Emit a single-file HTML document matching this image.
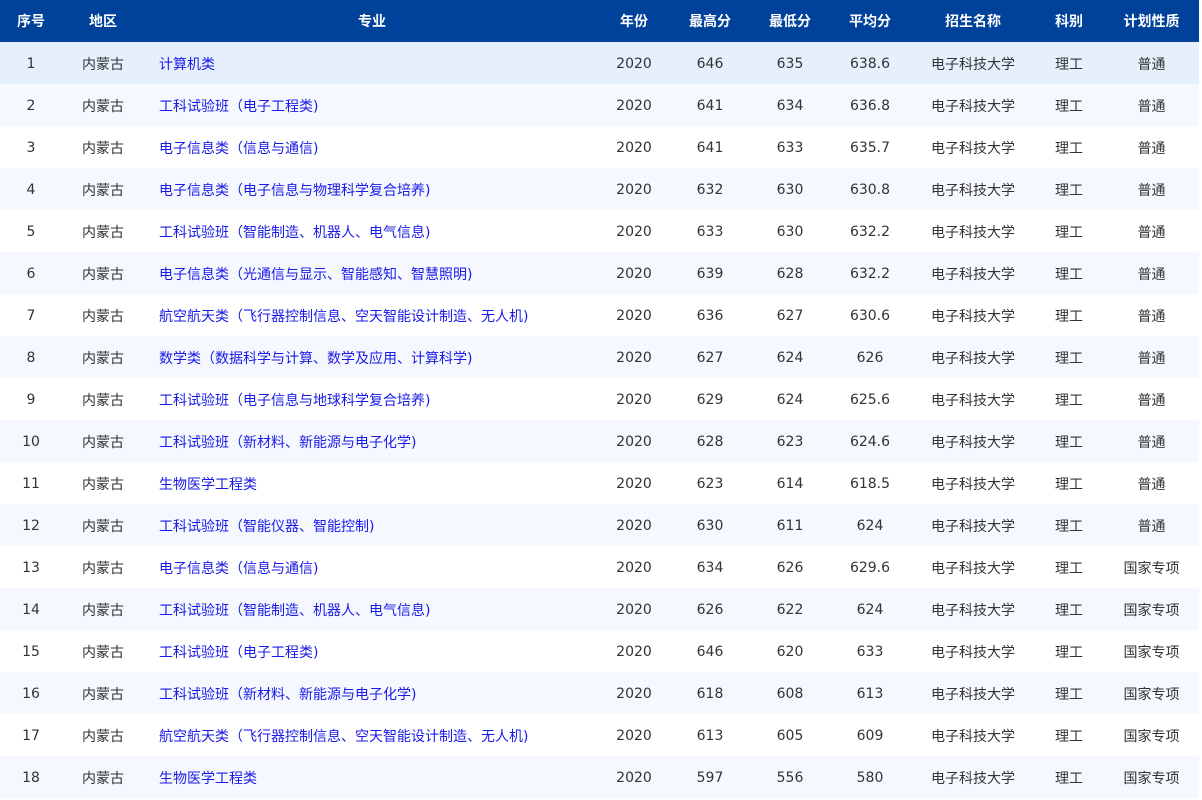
<!DOCTYPE html>
<html><head><meta charset="utf-8"><style>
body{margin:0;background:#fff;width:1202px;height:800px;overflow:hidden;font-family:"DejaVu Sans","Noto Sans CJK SC",sans-serif;}
table{border-collapse:collapse;table-layout:fixed;width:1199px;font-size:14px;}
th{background:#00419a;color:#fff;height:42px;font-weight:bold;padding:0;text-align:center;font-size:14px;}
td{height:40px;padding:2px 0 0 0;text-align:center;color:#333;}
td.m{text-align:left;padding-left:15px;color:#1a1ae6;}
tr.a td{background:#f5f8fe;} tr.h td{background:#e6f0fc;}
</style></head><body>
<table>
<colgroup><col style="width:62px"><col style="width:82px"><col style="width:456px"><col style="width:68px"><col style="width:84px"><col style="width:76px"><col style="width:84px"><col style="width:122px"><col style="width:70px"><col style="width:95px"></colgroup>
<tr><th>序号</th><th>地区</th><th>专业</th><th>年份</th><th>最高分</th><th>最低分</th><th>平均分</th><th>招生名称</th><th>科别</th><th>计划性质</th></tr>
<tr class="h"><td>1</td><td>内蒙古</td><td class="m">计算机类</td><td>2020</td><td>646</td><td>635</td><td>638.6</td><td>电子科技大学</td><td>理工</td><td>普通</td></tr>
<tr class="a"><td>2</td><td>内蒙古</td><td class="m">工科试验班（电子工程类)</td><td>2020</td><td>641</td><td>634</td><td>636.8</td><td>电子科技大学</td><td>理工</td><td>普通</td></tr>
<tr><td>3</td><td>内蒙古</td><td class="m">电子信息类（信息与通信)</td><td>2020</td><td>641</td><td>633</td><td>635.7</td><td>电子科技大学</td><td>理工</td><td>普通</td></tr>
<tr class="a"><td>4</td><td>内蒙古</td><td class="m">电子信息类（电子信息与物理科学复合培养)</td><td>2020</td><td>632</td><td>630</td><td>630.8</td><td>电子科技大学</td><td>理工</td><td>普通</td></tr>
<tr><td>5</td><td>内蒙古</td><td class="m">工科试验班（智能制造、机器人、电气信息)</td><td>2020</td><td>633</td><td>630</td><td>632.2</td><td>电子科技大学</td><td>理工</td><td>普通</td></tr>
<tr class="a"><td>6</td><td>内蒙古</td><td class="m">电子信息类（光通信与显示、智能感知、智慧照明)</td><td>2020</td><td>639</td><td>628</td><td>632.2</td><td>电子科技大学</td><td>理工</td><td>普通</td></tr>
<tr><td>7</td><td>内蒙古</td><td class="m">航空航天类（飞行器控制信息、空天智能设计制造、无人机)</td><td>2020</td><td>636</td><td>627</td><td>630.6</td><td>电子科技大学</td><td>理工</td><td>普通</td></tr>
<tr class="a"><td>8</td><td>内蒙古</td><td class="m">数学类（数据科学与计算、数学及应用、计算科学)</td><td>2020</td><td>627</td><td>624</td><td>626</td><td>电子科技大学</td><td>理工</td><td>普通</td></tr>
<tr><td>9</td><td>内蒙古</td><td class="m">工科试验班（电子信息与地球科学复合培养)</td><td>2020</td><td>629</td><td>624</td><td>625.6</td><td>电子科技大学</td><td>理工</td><td>普通</td></tr>
<tr class="a"><td>10</td><td>内蒙古</td><td class="m">工科试验班（新材料、新能源与电子化学)</td><td>2020</td><td>628</td><td>623</td><td>624.6</td><td>电子科技大学</td><td>理工</td><td>普通</td></tr>
<tr><td>11</td><td>内蒙古</td><td class="m">生物医学工程类</td><td>2020</td><td>623</td><td>614</td><td>618.5</td><td>电子科技大学</td><td>理工</td><td>普通</td></tr>
<tr class="a"><td>12</td><td>内蒙古</td><td class="m">工科试验班（智能仪器、智能控制)</td><td>2020</td><td>630</td><td>611</td><td>624</td><td>电子科技大学</td><td>理工</td><td>普通</td></tr>
<tr><td>13</td><td>内蒙古</td><td class="m">电子信息类（信息与通信)</td><td>2020</td><td>634</td><td>626</td><td>629.6</td><td>电子科技大学</td><td>理工</td><td>国家专项</td></tr>
<tr class="a"><td>14</td><td>内蒙古</td><td class="m">工科试验班（智能制造、机器人、电气信息)</td><td>2020</td><td>626</td><td>622</td><td>624</td><td>电子科技大学</td><td>理工</td><td>国家专项</td></tr>
<tr><td>15</td><td>内蒙古</td><td class="m">工科试验班（电子工程类)</td><td>2020</td><td>646</td><td>620</td><td>633</td><td>电子科技大学</td><td>理工</td><td>国家专项</td></tr>
<tr class="a"><td>16</td><td>内蒙古</td><td class="m">工科试验班（新材料、新能源与电子化学)</td><td>2020</td><td>618</td><td>608</td><td>613</td><td>电子科技大学</td><td>理工</td><td>国家专项</td></tr>
<tr><td>17</td><td>内蒙古</td><td class="m">航空航天类（飞行器控制信息、空天智能设计制造、无人机)</td><td>2020</td><td>613</td><td>605</td><td>609</td><td>电子科技大学</td><td>理工</td><td>国家专项</td></tr>
<tr class="a"><td>18</td><td>内蒙古</td><td class="m">生物医学工程类</td><td>2020</td><td>597</td><td>556</td><td>580</td><td>电子科技大学</td><td>理工</td><td>国家专项</td></tr>
</table>
</body></html>
